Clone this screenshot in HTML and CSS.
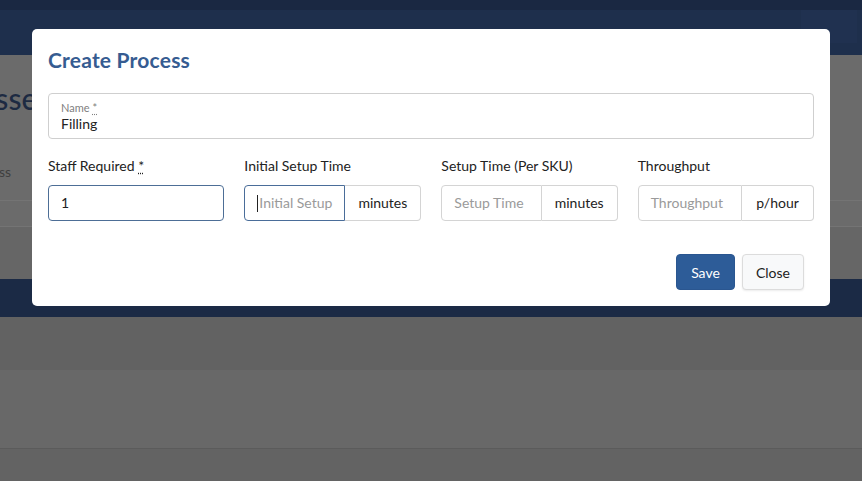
FILE: index.html
```html
<!DOCTYPE html>
<html lang="en">
<head>
    <meta charset="UTF-8">
    <meta name="viewport" content="width=device-width, initial-scale=1.0">
    <title>Create Process</title>
    <link rel="stylesheet" href="styles.css">
</head>
<body>
    <div class="page">
        <div class="topbar"></div>
        <div class="navbar"><div class="nav-box"></div></div>
        <div class="content">
            <h1 class="page-title">Processes</h1>
            <div class="crumb">Process</div>
            <div class="tabs"></div>
            <div class="toolbar"></div>
        </div>
        <div class="band"></div>
        <div class="row-a"></div>
        <div class="row-b"></div>
        <div class="row-c"></div>
    </div>

    <div class="modal">
        <h2 class="modal-title">Create Process</h2>

        <div class="float-field">
            <label>Name <span class="req">*</span></label>
            <div class="value">Filling</div>
        </div>

        <div class="fields">
            <div class="field">
                <label>Staff Required <span class="req">*</span></label>
                <div class="input dark">1</div>
            </div>
            <div class="field">
                <label>Initial Setup Time</label>
                <div class="group">
                    <div class="input focus"><span class="caret"></span>Initial Setup</div>
                    <div class="addon">minutes</div>
                </div>
            </div>
            <div class="field">
                <label>Setup Time (Per SKU)</label>
                <div class="group">
                    <div class="input placeholder">Setup Time</div>
                    <div class="addon">minutes</div>
                </div>
            </div>
            <div class="field">
                <label>Throughput</label>
                <div class="group">
                    <div class="input placeholder">Throughput</div>
                    <div class="addon short">p/hour</div>
                </div>
            </div>
        </div>

        <div class="actions">
            <button class="btn save">Save</button>
            <button class="btn close">Close</button>
        </div>
    </div>
</body>
</html>
```

FILE: styles.css
```css
body {
    margin: 0;
    font-family: Lato, "Noto Sans", sans-serif;
    color: #222;
    background-color: #646464;
    overflow: hidden;
}

.page {
    height: 481px;
    display: flex;
    flex-direction: column;
}

.topbar {
    height: 10px;
    background-color: #1a2842;
}

.navbar {
    height: 45px;
    background-color: #1e2f4c;
    display: flex;
    justify-content: flex-end;
    align-items: flex-start;
}

.nav-box {
    width: 56px;
    height: 33px;
    margin-right: 5px;
    background-color: #203150;
}

.content {
    height: 224px;
    background-color: #6b6b6b;
    display: flex;
    flex-direction: column;
}

.page-title {
    margin: 25px 0 0 -80px;
    font-size: 30px;
    font-weight: 500;
    color: #1d2a42;
    line-height: 36px;
    height: 36px;
}

.crumb {
    margin: 46px 0 0 -36px;
    font-size: 14px;
    color: #3f3f3f;
    height: 20px;
    line-height: 20px;
}

.tabs {
    height: 27px;
    margin-top: 18px;
    border-top: 1px solid #747474;
    border-bottom: 1px solid #747474;
    box-sizing: border-box;
}

.toolbar {
    flex: 1;
    background-color: #666;
}

.band {
    height: 38px;
    background-color: #1b2a45;
}

.row-a {
    height: 53px;
    background-color: #626262;
}

.row-b {
    height: 78px;
    background-color: #686868;
    border-bottom: 1px solid #5b5b5b;
}

.row-c {
    flex: 1;
    background-color: #636363;
}

/* dialog */
.modal {
    position: absolute;
    left: 32px;
    top: 29px;
    width: 798px;
    height: 277px;
    box-sizing: border-box;
    background-color: #fff;
    border-radius: 5px;
    padding: 16px 16px 0 16px;
}

.modal-title {
    margin: 0;
    font-size: 21px;
    font-weight: 700;
    color: #365c91;
    line-height: 30px;
    letter-spacing: 0.2px;
}

.float-field {
    margin-top: 18px;
    height: 46px;
    border: 1px solid #cfcfcf;
    border-radius: 4px;
    box-sizing: border-box;
    padding: 7px 12px 0 12px;
}

.float-field label {
    display: block;
    font-size: 11px;
    color: #808080;
    line-height: 14px;
}

.float-field .value {
    font-size: 14px;
    line-height: 18px;
    color: #222;
}

.req {
    text-decoration: underline dotted;
    text-underline-offset: 2px;
}

.fields {
    display: grid;
    grid-template-columns: repeat(4, 1fr);
    column-gap: 20px;
    margin-top: 18px;
}

.field label {
    display: block;
    font-size: 14px;
    line-height: 18px;
    color: #222;
    margin-bottom: 10px;
}

.input {
    height: 36px;
    box-sizing: border-box;
    border: 1px solid #d4d4d4;
    border-radius: 4px;
    padding: 0 12px;
    font-size: 14px;
    line-height: 34px;
    display: flex;
    align-items: center;
}

.input.dark {
    border-color: #4d6e96;
}

.group {
    display: flex;
}

.group .input {
    flex: 1;
    border-radius: 4px 0 0 4px;
    min-width: 0;
    overflow: hidden;
    white-space: nowrap;
}

.group .input.focus {
    border-color: #4a6d99;
    color: #9a9a9a;
}

.input.placeholder {
    color: #9a9a9a;
}

.caret {
    display: inline-block;
    width: 1px;
    height: 17px;
    background-color: #222;
    margin-right: 1px;
}

.addon {
    width: 76px;
    height: 36px;
    box-sizing: border-box;
    border: 1px solid #d4d4d4;
    border-left: none;
    border-radius: 0 4px 4px 0;
    font-size: 14px;
    line-height: 34px;
    text-align: center;
    color: #222;
    white-space: nowrap;
}

.addon.short {
    width: 72px;
}

.actions {
    display: flex;
    justify-content: flex-end;
    gap: 7px;
    margin-top: 33px;
    padding-right: 10px;
}

.btn {
    font-family: Lato, "Noto Sans", sans-serif;
    font-size: 14px;
    height: 36px;
    border-radius: 4px;
    padding: 0 12px;
    cursor: pointer;
}

.btn.save {
    background-color: #2d5c98;
    color: #fff;
    border: 1px solid #2a5690;
    width: 59px;
}

.btn.close {
    background-color: #f8f9fa;
    color: #222;
    border: 1px solid #dcdcdc;
    width: 62px;
    box-shadow: 0 1px 2px rgba(0, 0, 0, 0.08);
}
```
